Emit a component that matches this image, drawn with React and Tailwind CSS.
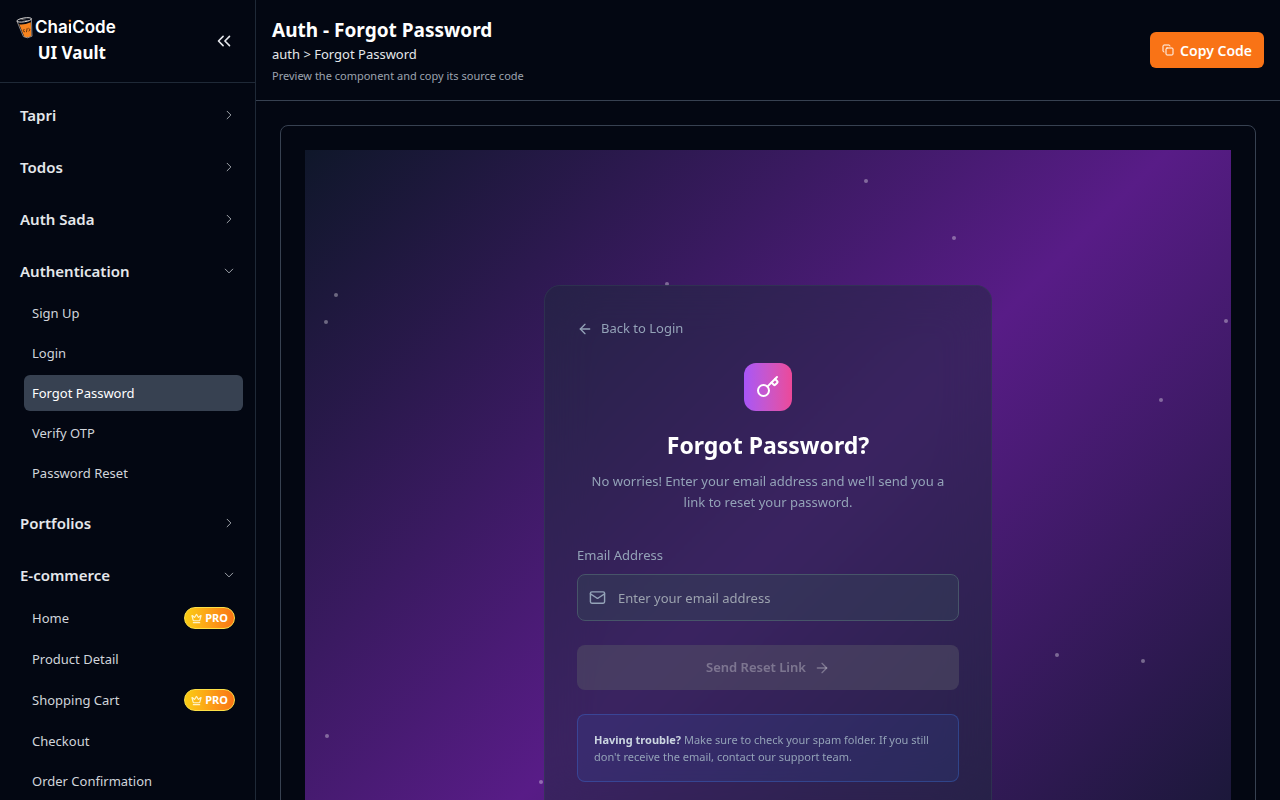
import React, { useState } from "react";
import { ArrowLeft, ArrowRight, ChevronsLeft, Copy, Crown, Key, Mail } from "lucide-react";
import { HiOutlineChevronDown, HiOutlineChevronRight } from "react-icons/hi2";

const SECTIONS = [
  { name: "Tapri" },
  { name: "Todos" },
  { name: "Auth Sada" },
  {
    name: "Authentication",
    items: [
      { name: "Sign Up" },
      { name: "Login" },
      { name: "Forgot Password", active: true },
      { name: "Verify OTP" },
      { name: "Password Reset" },
    ],
  },
  { name: "Portfolios" },
  {
    name: "E-commerce",
    items: [
      { name: "Home", pro: true },
      { name: "Product Detail" },
      { name: "Shopping Cart", pro: true },
      { name: "Checkout" },
      { name: "Order Confirmation" },
    ],
  },
];

// Centre of each star, as a share of the stage.
const STARS = [
  [60.6, 3.9],
  [70.1, 11],
  [3.3, 18.1],
  [2.3, 21.5],
  [39.1, 16.8],
  [99.5, 21.4],
  [92.4, 31.2],
  [81.2, 63.1],
  [90.5, 63.9],
  [2.4, 73.2],
  [25.5, 79],
];

function Cup() {
  return (
    <svg viewBox="0 0 18 24" className="h-6 w-[18px] shrink-0" fill="none" aria-hidden="true">
      <path d="M3.2 8.2 Q8 9 14.8 6.2 L15.4 20 Q12 22.2 8.4 21 Z" fill="#f7841f" />
      <path d="M0.9 5 L7.4 20.6 Q11.6 23.2 16 20.2 L15.4 2.8" stroke="#a8a29e" strokeWidth="0.8" />
      <ellipse cx="8.2" cy="3.9" rx="7.4" ry="1.9" transform="rotate(-9 8.2 3.9)" stroke="#e7e5e4" strokeWidth="0.9" />
      <path d="M4.6 3 L12.4 5" stroke="#a8a29e" strokeWidth="0.6" />
      <path d="M8.4 13 L7 14.8 L9 16 M12.4 12.2 L14 13.6 L12.8 15.4 M11.2 12.2 L10.4 16.2" stroke="#5b2c0c" strokeWidth="0.9" />
    </svg>
  );
}

function ProBadge() {
  return (
    <span className="flex h-[22px] items-center gap-[3px] rounded-full border border-[#fde047] bg-linear-to-r from-[#facc15] to-[#f97316] px-1.5 text-[11px] font-bold text-white">
      <Crown className="size-[11px] text-[#fef3c7]" strokeWidth={2.5} />
      PRO
    </span>
  );
}

function Section({ section }) {
  const [open, setOpen] = useState(Boolean(section.items));
  const Chevron = open ? HiOutlineChevronDown : HiOutlineChevronRight;
  return (
    <li>
      <button
        type="button"
        aria-expanded={open}
        onClick={() => setOpen(!open)}
        className="flex h-10 w-full items-center justify-between rounded-md px-2 text-[15px] font-semibold text-[#e5e7eb]"
      >
        {section.name}
        <Chevron className="size-3 text-[#d1d5db]" />
      </button>
      {open && section.items && (
        <ul className="mt-1 ml-3 flex flex-col gap-1">
          {section.items.map((item) => (
            <li key={item.name}>
              <a
                href="#"
                className={
                  item.active
                    ? "flex items-center justify-between rounded-md bg-[#374151] px-2 py-2 text-[13px] leading-5 text-white"
                    : "flex items-center justify-between rounded-md px-2 py-2 text-[13px] leading-5 text-[#d1d5db]"
                }
              >
                {item.name}
                {item.pro && <ProBadge />}
              </a>
            </li>
          ))}
        </ul>
      )}
    </li>
  );
}

function Sidebar() {
  return (
    <aside className="flex w-64 shrink-0 flex-col border-r border-[#1f2937]">
      <div className="flex items-center justify-between border-b border-[#1f2937] py-4 pr-5 pl-4">
        <a href="#" className="flex flex-col">
          <span className="flex h-6 items-center gap-px">
            <Cup />
            <span className="font-['Inter',sans-serif] text-[17px] font-semibold text-white">
              Cha
              <span className="bg-[linear-gradient(#f7841f_7px,#ffffff_7px)] bg-clip-text text-transparent">i</span>
              Code
            </span>
          </span>
          <span className="h-[26px] pl-3 text-center text-[17px] leading-[26px] font-bold text-white">UI Vault</span>
        </a>
        <button type="button" aria-label="Collapse sidebar" className="text-[#e5e7eb]">
          <ChevronsLeft className="size-[22px]" strokeWidth={1.75} />
        </button>
      </div>
      <nav className="min-h-0 flex-1 overflow-y-auto p-3 [scrollbar-width:none]">
        <ul className="flex flex-col gap-3">
          {SECTIONS.map((s) => (
            <Section key={s.name} section={s} />
          ))}
        </ul>
      </nav>
    </aside>
  );
}

function ForgotPasswordCard() {
  const [email, setEmail] = useState("");
  return (
    <div className="relative w-full max-w-md rounded-2xl border border-[#334155]/50 bg-[#1e293b]/50 p-8 backdrop-blur-xl">
      <a href="#" className="flex items-center gap-2 text-[13px] leading-[21px] text-[#94a3b8]">
        <ArrowLeft className="size-4" />
        Back to Login
      </a>
      <div className="mt-6 flex flex-col items-center text-center">
        <div className="flex size-12 items-center justify-center rounded-xl bg-linear-to-r from-[#a855f7] to-[#ec4899]">
          <Key className="size-6 text-white" />
        </div>
        <h2 className="mt-4 text-[23px] leading-9 font-bold text-white">Forgot Password?</h2>
        <p className="mt-2 px-2 text-[13px] leading-[21px] text-[#94a3b8]">
          No worries! Enter your email address and we'll send you a link to reset your password.
        </p>
      </div>
      <form className="mt-8 flex flex-col" onSubmit={(e) => e.preventDefault()}>
        <label htmlFor="email" className="mb-2 text-[13px] leading-[21px] text-[#94a3b8]">
          Email Address
        </label>
        <div className="flex h-[47px] items-center gap-3 rounded-lg border border-[#475569] bg-[#334155]/50 px-[11px]">
          <Mail className="size-[17px] shrink-0 text-[#94a3b8]" />
          <input
            id="email"
            type="email"
            value={email}
            onChange={(e) => setEmail(e.target.value)}
            placeholder="Enter your email address"
            className="h-full w-full min-w-0 bg-transparent text-[13px] text-white outline-none placeholder:text-[#9ca3af]"
          />
        </div>
        <button
          type="submit"
          disabled={!email}
          className="mt-6 flex h-[45px] items-center justify-center gap-2 rounded-lg bg-[#565466]/50 text-[13px] font-semibold text-white/30"
        >
          Send Reset Link
          <ArrowRight className="size-4" />
        </button>
      </form>
      <p className="mt-6 rounded-lg border border-[#3b82f6]/30 bg-[#3b82f6]/10 p-4 text-[11px] leading-[17px] text-[#94a3b8]">
        <strong className="font-bold text-[#cbd5e1]">Having trouble?</strong> Make sure to check your spam folder. If you
        still don't receive the email, contact our support team.
      </p>
    </div>
  );
}

export default function App() {
  return (
    <div className="flex h-screen overflow-hidden bg-[#030712] font-['Noto_Sans',sans-serif] text-white">
      <Sidebar />
      <main className="flex min-w-0 flex-1 flex-col">
        <header className="flex items-center justify-between border-b border-[#374151] p-4">
          <div>
            <h1 className="text-[19px] leading-7 font-bold">Auth - Forgot Password</h1>
            <p className="text-[13px] leading-5 text-[#e5e7eb]">auth &gt; Forgot Password</p>
            <p className="mt-1 text-[11px] leading-4 text-[#9ca3af]">Preview the component and copy its source code</p>
          </div>
          <button
            type="button"
            className="flex h-9 items-center gap-1.5 rounded-md bg-[#f97316] px-3 text-[14px] font-semibold text-white"
          >
            <Copy className="size-3" />
            Copy Code
          </button>
        </header>
        <div className="min-h-0 flex-1 overflow-y-auto p-6 [scrollbar-width:none]">
          <section className="rounded-lg border border-[#374151] p-6">
            <div className="relative flex min-h-screen items-center justify-center overflow-hidden bg-[linear-gradient(135deg,#0f172a,#581c87,#0f172a)]">
              {STARS.map(([x, y]) => (
                <span
                  key={`${x}-${y}`}
                  className="absolute size-1 -translate-1/2 rounded-full bg-white/35"
                  style={{ left: `${x}%`, top: `${y}%` }}
                />
              ))}
              <ForgotPasswordCard />
            </div>
          </section>
        </div>
      </main>
    </div>
  );
}
